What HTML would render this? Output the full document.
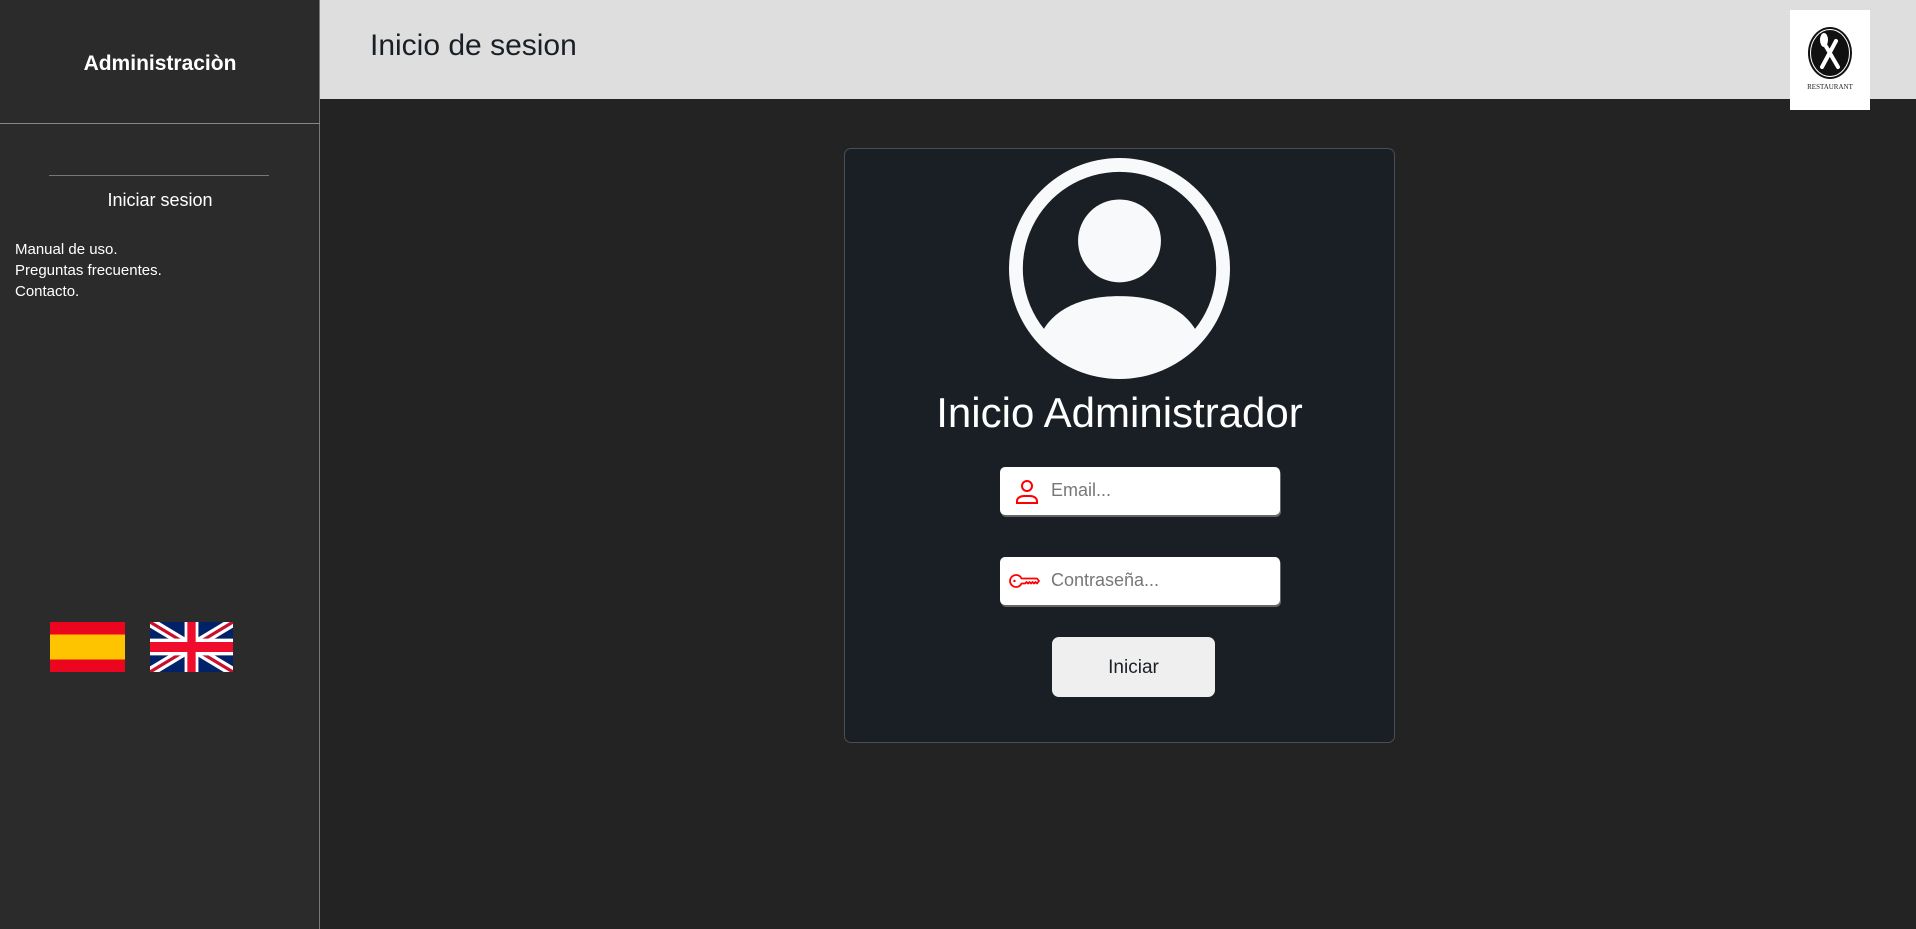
<!DOCTYPE html>
<html><head><meta charset="utf-8"><style>
*{margin:0;padding:0;box-sizing:border-box}
body{width:1916px;height:929px;overflow:hidden;background:#232323;font-family:"Liberation Sans",sans-serif;position:relative}
.side{position:absolute;left:0;top:0;width:320px;height:929px;background:#2b2b2b;border-right:1px solid #777}
.abs{position:absolute}
.hdr{position:absolute;left:320px;top:0;width:1596px;height:99px;background:#dedede}
.card{position:absolute;left:844px;top:148px;width:551px;height:595px;background:#1a1f25;border:1px solid #4a4f55;border-radius:7px}
.inp{position:absolute;left:1000px;width:280px;height:48px;background:#fff;border-radius:5px;box-shadow:1px 2px 0 #666;color:#777;font-size:18px}
</style></head><body>
<div class="side">
  <div class="abs" style="left:0;width:320px;top:52px;text-align:center;color:#fff;font-weight:bold;font-size:21px">Administraciòn</div>
  <div class="abs" style="left:0;width:320px;top:123px;border-top:1px solid #888"></div>
  <div class="abs" style="left:49px;width:220px;top:175px;border-top:1px solid #777"></div>
  <div class="abs" style="left:0;width:320px;top:190px;text-align:center;color:#fff;font-size:18px">Iniciar sesion</div>
  <div class="abs" style="left:15px;top:239px;color:#fff;font-size:15px;line-height:21px">Manual de uso.<br>Preguntas frecuentes.<br>Contacto.</div>
  <svg class="abs" style="left:50px;top:622px" width="75" height="50"><rect width="75" height="50" fill="#ec051f"/><rect y="12.5" width="75" height="25" fill="#ffc400"/></svg>
  <svg class="abs" style="left:150px;top:622px" width="83" height="50" viewBox="0 0 60 30" preserveAspectRatio="none"><rect width="60" height="30" fill="#012169"/><path d="M0 0L60 30M60 0L0 30" stroke="#fff" stroke-width="6"/><path d="M0 0L60 30M60 0L0 30" stroke="#C8102E" stroke-width="2"/><path d="M30 0V30M0 15H60" stroke="#fff" stroke-width="10"/><path d="M30 0V30M0 15H60" stroke="#ef0c2c" stroke-width="6"/></svg>
</div>
<div class="hdr">
  <div class="abs" style="left:50px;top:29px;font-size:30px;color:#1a1f25">Inicio de sesion</div>
  <div class="abs" style="left:1470px;top:10px;width:80px;height:100px;background:#fff">
    <svg width="80" height="100" viewBox="0 0 80 100"><ellipse cx="40" cy="43" rx="22" ry="26" fill="#111"/><ellipse cx="40" cy="43" rx="19.5" ry="23.5" fill="none" stroke="#fff" stroke-width="1"/><path d="M32 57L46 31M48 57L34 33" stroke="#fff" stroke-width="4" stroke-linecap="round"/><ellipse cx="34" cy="30" rx="4" ry="7" fill="#fff"/><text x="40" y="79" font-size="7" text-anchor="middle" font-family="Liberation Serif,serif" fill="#222">RESTAURANT</text></svg>
  </div>
</div>
<div class="card"></div>
<svg class="abs" style="left:1009px;top:158px" width="221" height="221" viewBox="0 0 16 16" fill="#f8f9fa"><path d="M11 6a3 3 0 1 1-6 0 3 3 0 0 1 6 0z"/><path fill-rule="evenodd" d="M0 8a8 8 0 1 1 16 0A8 8 0 0 1 0 8zm8-7a7 7 0 0 0-5.468 11.37C3.242 11.226 4.805 10 8 10s4.765 1.225 5.468 2.37A7 7 0 0 0 8 1z"/></svg>
<div class="abs" style="left:844px;width:551px;top:389px;text-align:center;color:#fff;font-size:42px">Inicio Administrador</div>
<div class="inp" style="top:467px">
  <svg class="abs" style="left:13px;top:11px" width="28" height="28" viewBox="0 0 28 28" fill="none" stroke="#f00" stroke-width="2"><circle cx="14" cy="8" r="5"/><path d="M4 25v-2a7 5 0 0 1 7-5h6a7 5 0 0 1 7 5v2z"/></svg>
  <div class="abs" style="left:51px;top:13px">Email...</div>
</div>
<div class="inp" style="top:557px">
  <svg class="abs" style="left:8px;top:15px" width="36" height="18" viewBox="0 0 36 18" fill="none" stroke="#f00" stroke-width="1.8" stroke-linejoin="round"><path d="M13.5 6.5A6 6 0 1 0 13.5 11.5H17l1.5-1.5 1.5 1.5 1.5-1.5 1.5 1.5 1.5-1.5 1.5 1.5 1.5-1.5 1.5 1.5 2-2.5-2-2.5z"/><circle cx="6.5" cy="9" r="1.2" fill="#f00" stroke="none"/></svg>
  <div class="abs" style="left:51px;top:13px">Contraseña...</div>
</div>
<div class="abs" style="left:1052px;top:637px;width:163px;height:60px;background:#efefef;border-radius:7px;text-align:center;line-height:62px;font-size:19px;color:#1a1f25">Iniciar</div>
</body></html>
